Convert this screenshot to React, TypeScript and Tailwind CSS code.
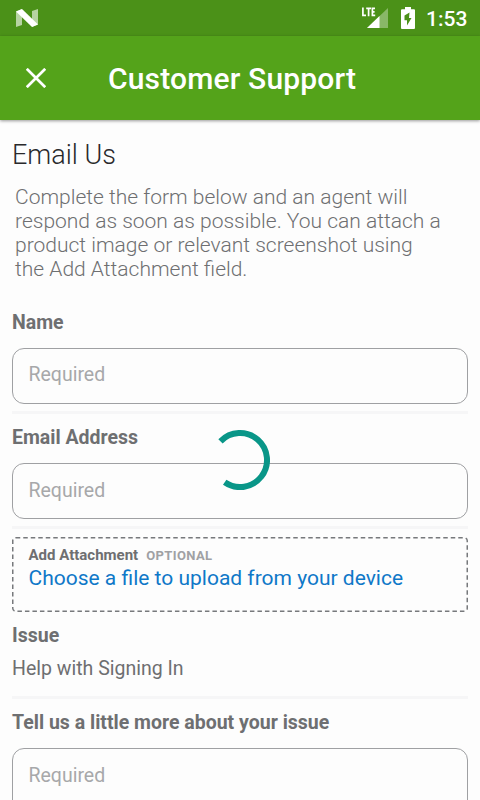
import React from "react";

function StatusBar() {
  return (
    <div className="flex h-9 shrink-0 items-center bg-[#4b9118] pl-4 text-white">
      <svg width="22" height="19" viewBox="0 0 22 19">
        <path d="M0 2.5 L6 0 V16 L0 18Z M16 2 L22 0 V15.5 L16 18Z" fill="#fff" fillOpacity=".6" />
        <path d="M0 2.5 L6 0 L22 15.5 L16 18Z" fill="#fff" />
      </svg>
      <svg className="ml-auto" width="27" height="22" viewBox="0 0 27 22">
        <path d="M27 1 V21 H6Z" fill="#fff" fillOpacity=".35" />
        <path d="M18.5 9 V21 H6Z" fill="#fff" />
        <path d="M1.9 .5 V8.4 H5 M5.2 1.3 H10 M7.6 1.3 V9.2 M14 1.3 H11.4 V8.4 H14.2 M11.4 4.9 H13.6" fill="none" stroke="#fff" strokeWidth="1.7" />
      </svg>
      <svg className="ml-[13px]" width="14" height="22" viewBox="0 0 14 22">
        <path d="M1 2.2 H4 V0 H10 V2.2 H13 Q14 2.2 14 3.2 V21 Q14 22 13 22 H1 Q0 22 0 21 V3.2 Q0 2.2 1 2.2Z" fill="#fff" />
        <path d="M8.5 5.5 L3.5 8.5 V13.2 H6 V18.5 L10.5 11 H8Z" fill="#4b9118" />
      </svg>
      <span className="ml-[11px] mr-3 w-[42px] whitespace-nowrap pt-0.5 text-[21px] leading-6 font-medium">1:53</span>
    </div>
  );
}

function AppBar() {
  return (
    <header className="z-10 flex h-[84px] shrink-0 items-center bg-[#54a31a] pl-[26px] text-white shadow-[0_1px_3px_rgba(0,0,0,0.4)]">
      <svg width="20" height="20" viewBox="0 0 20 20" fill="none" stroke="#fff" strokeWidth="2.7">
        <path d="M.8 .8 L19.2 19.2 M19.2 .8 L.8 19.2" />
      </svg>
      <h1 className="ml-[62px] whitespace-nowrap pt-0.5 text-[30px] leading-9 font-medium tracking-[0.16px]">Customer Support</h1>
    </header>
  );
}

function Label({ children }: { children: React.ReactNode }) {
  return <div className="h-6 whitespace-nowrap text-[19.5px] leading-[26px] font-bold text-[#6e6f71]">{children}</div>;
}

function Divider() {
  return <div className="h-[3px] bg-[#f6f6f7]" />;
}

function Field({ className }: { className: string }) {
  return (
    <div className={`rounded-[12px] border border-[#9fa0a3] pl-[15.5px] text-[19.5px] leading-[26px] text-[#a7a8aa] ${className}`}>
      Required
    </div>
  );
}

function Attachment() {
  return (
    <div className="relative mt-2 h-[75px] pt-[9px] pl-[16.5px]">
      <svg className="absolute inset-0" width="456" height="75" fill="none">
        <rect x="0.75" y="0.75" width="454.5" height="73.5" rx="3" stroke="#77797c" strokeWidth="1.5" strokeDasharray="4.5 3" />
      </svg>
      <div className="flex h-[18px] items-baseline gap-2 whitespace-nowrap leading-[18px] font-bold">
        <span className="text-[15px] text-[#6e6f71]">Add Attachment</span>
        <span className="text-[13px] tracking-[0.4px] text-[#a0a1a4]">OPTIONAL</span>
      </div>
      <div className="mt-[2px] whitespace-nowrap text-[21px] leading-6 text-[#0f78c8]">Choose a file to upload from your device</div>
    </div>
  );
}

function Spinner() {
  return (
    <svg className="absolute top-[430px] left-[210px]" width="60" height="60" viewBox="0 0 60 60" fill="none">
      <path d="M10.5 11.4 A27 27 0 1 1 14.7 52.3" stroke="#099688" strokeWidth="6" />
    </svg>
  );
}

export default function App() {
  return (
    <div className="relative flex h-[800px] w-[480px] flex-col overflow-hidden bg-[#fdfdfd] font-['Roboto',sans-serif]">
      <StatusBar />
      <AppBar />
      <main className="flex min-h-0 flex-1 flex-col overflow-hidden px-3 pt-[19px] *:shrink-0">
        <h2 className="h-8 whitespace-nowrap text-[27px] leading-8 font-light text-[#29292b]">Email Us</h2>
        <p className="mt-[14px] ml-[3px] text-[21px] leading-6 font-light whitespace-nowrap text-[#6e6f71]">
          Complete the form below and an agent will
          <br />
          respond as soon as possible. You can attach a
          <br />
          product image or relevant screenshot using
          <br />
          the Add Attachment field.
        </p>
        <div className="mt-[29px]"><Label>Name</Label></div>
        <div className="mt-[14px] mb-[7px]"><Field className="h-14 pt-[13px]" /></div>
        <Divider />
        <div className="mt-[11px]"><Label>Email Address</Label></div>
        <div className="mt-[14px] mb-[7px]"><Field className="h-14 pt-[14px]" /></div>
        <Divider />
        <Attachment />
        <div className="mt-[11px]"><Label>Issue</Label></div>
        <div className="mt-[9px] mb-4 h-6 text-[19.5px] leading-[26px] text-[#6e6f71]">Help with Signing In</div>
        <Divider />
        <div className="mt-[11px]"><Label>Tell us a little more about your issue</Label></div>
        <div className="mt-[14px]"><Field className="h-24 pt-[14px]" /></div>
      </main>
      <Spinner />
    </div>
  );
}
